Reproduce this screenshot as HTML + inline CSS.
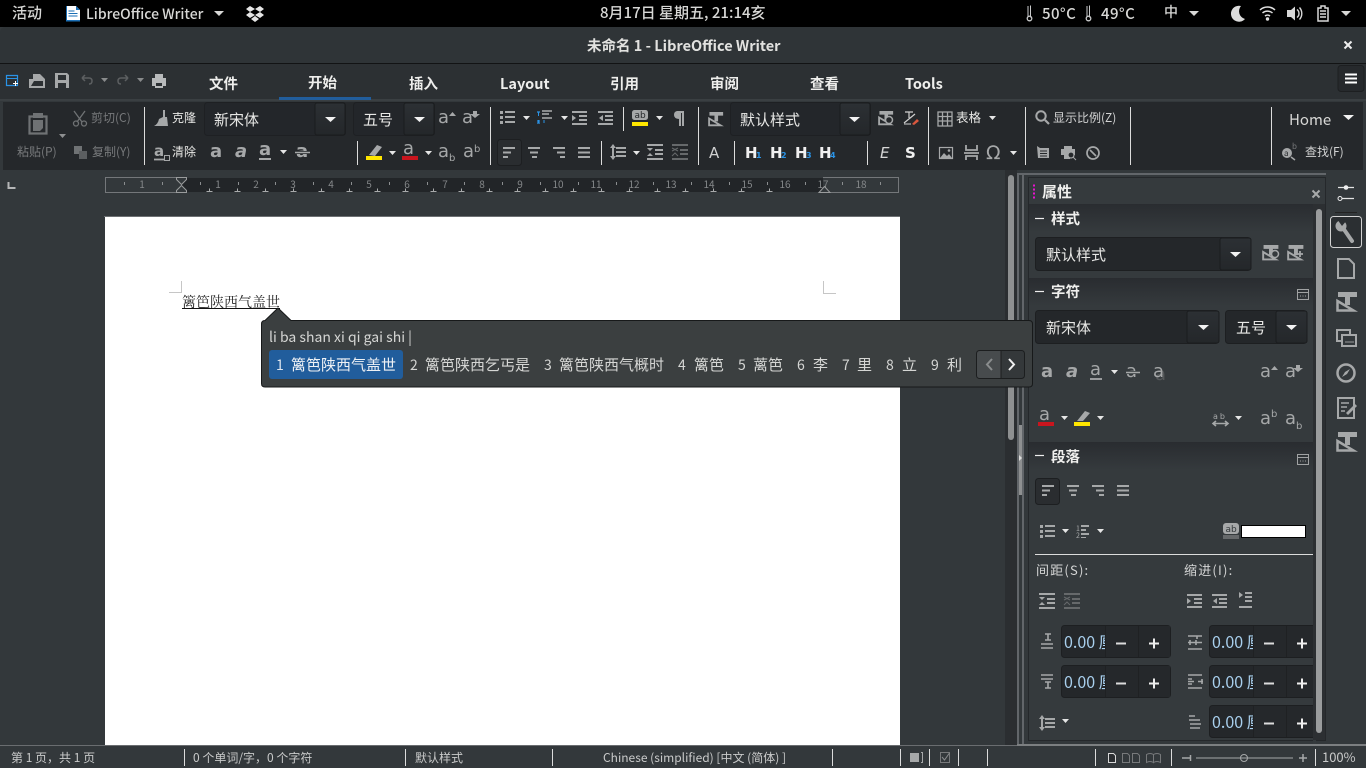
<!DOCTYPE html>
<html lang="zh-CN">
<head>
<meta charset="utf-8">
<title>未命名 1 - LibreOffice Writer</title>
<style>
html,body{margin:0;padding:0;width:1366px;height:768px;overflow:hidden;background:#33383b}
svg{display:block;position:absolute;left:0;top:0}
text{font-family:"Noto Sans CJK SC","Liberation Sans",sans-serif;fill:#e8e8e6;font-size:12px}
.top{font-size:14px;fill:#d8d8d6;font-weight:500}
.tab{font-size:14.5px;font-weight:700;fill:#eeeeec}
.dim{fill:#77797b}
.m{font-size:15px;fill:#e8e8e6}
.lab{font-size:12px;fill:#d2d3d3}
.h{font-size:14.5px;font-weight:700;fill:#f0f0ee}
.rul{font-size:10px;fill:#85888a}
.st{font-size:12px;fill:#c9caca}
.pop{font-size:14px;fill:#d5d6d4}
.cj{font-size:15px;fill:#d5d6d4}
.a{font-family:"DejaVu Sans",sans-serif;font-size:18px;font-weight:700;fill:#a6a8a9}
.al{font-family:"DejaVu Sans",sans-serif;font-size:18px;fill:#a6a8a9}
.sb{font-family:"DejaVu Sans",sans-serif;font-size:10px;fill:#a6a8a9}
.hh{font-family:"DejaVu Sans",sans-serif;font-size:15px;font-weight:700;fill:#f0f0f0}
.sub{font-family:"DejaVu Sans",sans-serif;font-size:8px;font-weight:700;fill:#2a93e6}
.sp{font-size:16px;fill:#a9d0ee}
.ico{fill:none;stroke:#a6a8a9;stroke-width:1.6}
.fi{fill:#a6a8a9}
</style>
</head>
<body>
<svg width="1366" height="768" viewBox="0 0 1366 768" xmlns="http://www.w3.org/2000/svg">
<defs>
<linearGradient id="sec" x1="0" y1="0" x2="0" y2="1"><stop offset="0" stop-color="#292c30"/><stop offset="1" stop-color="#353a3d"/></linearGradient>
<linearGradient id="btn" x1="0" y1="0" x2="0" y2="1"><stop offset="0" stop-color="#2c3034"/><stop offset="1" stop-color="#24272a"/></linearGradient>
<path id="c" d="M0 0h7l-3.500 4z" fill="#e6e6e6"/>
<path id="C" d="M0 0h11l-5.500 5z" fill="#f2f2f2"/>
<g id="st"><path d="M2 0h19v5h-7v8H9V5H2z" fill="#a6a8a9"/><path d="M1.500 9v9.500h16z" fill="none" stroke="#a6a8a9" stroke-width="2.500"/></g>
<g id="alL" fill="#a6a8a9"><path d="M0 0h12v2H0zM0 4.500h8v2H0zM0 9h5v2H0z"/></g>
<g id="alC" fill="#a6a8a9"><path d="M0 0h12v2H0zM2 4.500h8v2H2zM4 9h5v2H4z"/></g>
<g id="alR" fill="#a6a8a9"><path d="M0 0h12v2H0zM4 4.500h8v2H4zM7 9h5v2H7z"/></g>
<g id="alJ" fill="#a6a8a9"><path d="M0 0h12v2H0zM0 4.500h12v2H0zM0 9h12v2H0z"/></g>
<g id="bul" fill="#a6a8a9"><path d="M0 0h3v3H0zM0 5h3v3H0zM0 10h3v3H0zM5 0h10v2H5zM5 5h10v2H5zM5 10h10v2H5z"/></g>
<g id="ind" fill="#a6a8a9"><path d="M0 0h15v2H0zM7 4h8v2H7zM7 8h8v2H7zM0 12h15v2H0z"/><path d="M0 4l4 3-4 3z"/></g>
<g id="out" fill="#a6a8a9"><path d="M0 0h15v2H0zM7 4h8v2H7zM7 8h8v2H7zM0 12h15v2H0z"/><path d="M5 4L1 7l4 3z"/></g>
<g id="spi" fill="#a6a8a9"><path d="M0 0h16v2H0zM8 5h8v2H8zM8 9h8v2H8zM0 14h16v2H0zM0 4h6l-3 3zM0 12h6l-3-3z"/></g>
<g id="spd" fill="#66696b"><path d="M0 0h16v2H0zM8 5h8v2H8zM8 9h8v2H8zM0 14h16v2H0z"/><path d="M0 4l6 3M6 4L0 7M0 12l3-3 3 3" stroke="#66696b" fill="none"/></g>
<g id="ls" fill="#a6a8a9"><path d="M6 3h10v2H6zM6 7h10v2H6zM6 11h10v2H6z"/><path d="M3 0l3 4H4v8h2l-3 4-3-4h2V4H0z"/></g>
<g id="pan"><rect x=".5" y=".5" width="11" height="10" fill="none" stroke="#a0a2a3"/><path d="M1 3.500h10" stroke="#a0a2a3"/><path d="M3 7h1M5.500 7h1M8 7h1" stroke="#a0a2a3"/></g>
<g id="spb"><rect x=".5" y=".5" width="109" height="32" rx="3" fill="#24272a" stroke="#1d1f21"/></g>
</defs>

<!-- top bar -->
<rect width="1366" height="27" fill="#000"/>
<text x="12" y="18" class="top" style="font-size:15px">活动</text>
<path d="M66 6h10l4 4v11H66z" fill="#fff"/><path d="M76 6l4 4h-4z" fill="#1b6fb5"/><path d="M66 6h1v15h-1zM66 20h14v1.500H66z" fill="#1b6fb5"/><path d="M68.500 11h6M68.500 13.500h9M68.500 16h9" stroke="#1b6fb5"/>
<text x="86" y="19" class="top">LibreOffice Writer</text>
<path d="M214 11h10l-5 5z" fill="#d8d8d6"/>
<path d="M250 6l5 3-5 3-4-3zM260 6l4 3-4 3-5-3zM250 12l5 3-5 3-4-3zM260 12l4 3-4 3-5-3zM255 16l4 3-4 3-4-3z" fill="#e6e6e6"/>
<text x="600" y="18" class="top" style="font-size:15px">8月17日 星期五, 21:14亥</text>
<path d="M1028 6v11.500M1030.500 5.500v12" stroke="#c9cacb" fill="none"/><circle cx="1029.500" cy="18.500" r="2.300" fill="none" stroke="#c9cacb" stroke-width="1.300"/>
<text x="1042" y="19" class="top" style="font-size:15px;letter-spacing:.4px">50°C</text>
<path d="M1087 6v11.500M1089.500 5.500v12" stroke="#c9cacb" fill="none"/><circle cx="1088.500" cy="18.500" r="2.300" fill="none" stroke="#c9cacb" stroke-width="1.300"/>
<text x="1101" y="19" class="top" style="font-size:15px;letter-spacing:.4px">49°C</text>
<text x="1164" y="17" class="top">中</text>
<path d="M1189 11h10l-5 5z" fill="#d8d8d6"/>
<path d="M1241 6a8 8 0 1 0 4 13a8 8 0 0 1-4-13z" fill="#dcdcdc"/>
<path d="M1260 10a11 11 0 0 1 15 0M1262.500 13a7.500 7.500 0 0 1 10 0M1265 16a4 4 0 0 1 5 0" fill="none" stroke="#e0e0e0" stroke-width="1.500"/><circle cx="1267.500" cy="19" r="1.700" fill="#e0e0e0"/>
<path d="M1287 10h4l4-3.500v14l-4-3.500h-4z" fill="#d8d8d8"/><path d="M1297 9.500a5 5 0 0 1 0 8M1299.500 7.500a9 9 0 0 1 0 12" fill="none" stroke="#d8d8d8" stroke-width="1.400"/>
<path d="M1321 6h4v2h3v13h-10V8h3z" fill="none" stroke="#d8d8d8" stroke-width="1.500"/><path d="M1320 11h6M1320 14h6M1320 17h6" stroke="#d8d8d8" stroke-width="1.400"/>
<path d="M1341 11h10l-5 5z" fill="#d8d8d6"/>

<!-- title bar -->
<path d="M0 33q0-6 6-6h1354q6 0 6 6v31H0z" fill="#2f3437"/>
<rect y="63" width="1366" height="1" fill="#121314"/>
<text x="587" y="51" style="font-size:14.500px;font-weight:700;fill:#e2e2e0">未命名 1 - LibreOffice Writer</text>
<path d="M1344.500 41.500l7 7M1351.500 41.500l-7 7" stroke="#eee" stroke-width="2"/>

<!-- tab row -->
<rect y="64" width="1366" height="36" fill="#2c3033"/>
<rect y="99" width="1366" height="2" fill="#3a3f42"/>
<text x="209" y="89" class="tab">文件</text>
<text x="308" y="88" class="tab">开始</text>
<text x="409" y="89" class="tab">插入</text>
<text x="500" y="89" class="tab">Layout</text>
<text x="610" y="89" class="tab">引用</text>
<text x="710" y="89" class="tab">审阅</text>
<text x="810" y="89" class="tab">查看</text>
<text x="905" y="89" class="tab">Tools</text>
<rect x="279" y="97" width="92" height="3" fill="#215d9c"/>
<path d="M6.500 75.500h11v10h-11z" fill="none" stroke="#2a93e6" stroke-width="1.200"/><path d="M6 78.500h12" stroke="#2a93e6"/><path d="M13 83.500h5M15.500 81v5" stroke="#fff"/>
<path d="M29 88V79h4V74h7l5 5v9z" fill="#a6a8a9"/><path d="M31 86l3-5h9v5z" fill="#2c3033"/>
<path d="M55 73h12l2 2v13H55z" fill="#a6a8a9"/><path d="M58 75h8v5h-8zM58 83h8v5h-8z" fill="#2c3033"/>
<path d="M82 78l3-3M82 78l3 3M82 78h7q3 0 3 3t-3 3" fill="none" stroke="#5c5f61" stroke-width="1.500"/>
<use href="#c" x="101" y="78" opacity=".5"/>
<path d="M128 78l-3-3M128 78l-3 3M128 78h-7q-3 0-3 3t3 3" fill="none" stroke="#5c5f61" stroke-width="1.500"/>
<use href="#c" x="137" y="78" opacity=".5"/>
<path d="M155 74h8v4h3v8h-3v2h-8v-2h-3v-8h3z" fill="#b8babb"/><path d="M156 83h6v3h-6z" fill="#2c3033"/>
<rect x="1338" y="65.500" width="26" height="26" rx="3" fill="#26292c" stroke="#1d1f21"/>
<path d="M1345 74.500h12M1345 78.500h12M1345 82.500h12" stroke="#fff" stroke-width="2"/>

<!-- toolbar -->
<rect x="3" y="102" width="1360" height="68" fill="#25282b"/>
<g fill="#dcdcdc">
<rect x="144" y="107" width="1" height="58"/><rect x="357" y="141" width="1" height="24"/><rect x="490" y="107" width="1" height="58"/><rect x="623" y="107" width="1" height="24"/><rect x="601" y="141" width="1" height="24"/><rect x="698" y="107" width="1" height="58"/><rect x="734" y="141" width="1" height="24"/><rect x="867" y="141" width="1" height="24"/><rect x="928" y="107" width="1" height="58"/><rect x="1025" y="107" width="1" height="58"/><rect x="1130" y="107" width="1" height="58"/><rect x="1271" y="107" width="1" height="58"/>
</g>
<!-- clipboard -->
<path d="M29.500 116.500h17v17h-17z" fill="none" stroke="#6f7274" stroke-width="2.200"/><path d="M33 113h10v5H33z" fill="#6f7274"/><path d="M33 120h10v8l-3 3h-7z" fill="#6f7274"/>
<use href="#c" x="59" y="134" opacity=".55"/>
<circle cx="76" cy="123.500" r="2.500" fill="none" stroke="#6f7274" stroke-width="1.300"/><circle cx="84" cy="123.500" r="2.500" fill="none" stroke="#6f7274" stroke-width="1.300"/><path d="M74 111l8 11M85 111l-8 11" stroke="#6f7274" stroke-width="1.300"/>
<text x="91" y="122" class="dim">剪切(C)</text>
<text x="17" y="156" class="dim">粘贴(P)</text>
<path d="M74 146h8v8h-8z" fill="#6f7274"/><path d="M79 151h8v8h-8z" fill="#5b5e60"/>
<text x="92" y="156" class="dim">复制(Y)</text>
<path d="M163 110h2v7h2l1 9h-14q4-2 5-7l4-2z" fill="#a6a8a9"/>
<text x="172" y="122">克隆</text>
<text class="al" x="154" y="156" style="font-size:15px;font-weight:700">a</text><path d="M154 159.500h10" stroke="#a6a8a9" stroke-width="1.800"/><rect x="164.500" y="155.500" width="5" height="5" fill="none" stroke="#a6a8a9"/>
<text x="172" y="156">清除</text>
<text class="a" x="210" y="157">a</text>
<text class="a" x="235" y="157" font-style="italic">a</text>
<text class="al" x="259" y="155" style="font-weight:700">a</text><path d="M259 159h12" stroke="#a6a8a9" stroke-width="2"/>
<use href="#c" x="280" y="150"/>
<text class="a" x="296" y="157">a</text><path d="M295 152.500h15" stroke="#25282b" stroke-width="3"/><path d="M295 152.500h15" stroke="#a6a8a9" stroke-width="1.500"/>
<!-- font combo -->
<rect x="204.500" y="102.500" width="141" height="33" rx="3" fill="#23262a" stroke="#1e2023"/>
<rect x="315" y="103" width="30" height="32" rx="2" fill="url(#btn)" stroke="#1a1c1e"/>
<use href="#C" x="325" y="117"/>
<text x="214" y="125" class="m">新宋体</text>
<rect x="353.500" y="102.500" width="81" height="33" rx="3" fill="#23262a" stroke="#1e2023"/>
<rect x="404" y="103" width="30" height="32" rx="2" fill="url(#btn)" stroke="#1a1c1e"/>
<use href="#C" x="414" y="117"/>
<text x="363" y="125" class="m">五号</text>
<text class="al" x="438" y="123">a</text><path d="M449 116l3.500-4 3.500 4z" class="fi"/>
<text class="al" x="462" y="123">a</text><path d="M473 111h4v3h3l-5 4-5-4h3z" class="fi"/>
<path d="M369 155l8-10 5 2-7 9z" fill="#a6a8a9"/><rect x="366" y="156" width="16" height="4" fill="#ffe600"/>
<use href="#c" x="389" y="151"/>
<text class="al" x="403" y="154">a</text><rect x="402" y="156" width="16" height="4" fill="#c9151e"/>
<use href="#c" x="425" y="151"/>
<text class="al" x="438" y="157">a</text><text class="sb" x="449" y="161">b</text>
<text class="al" x="463" y="157">a</text><text class="sb" x="474" y="152">b</text>
<!-- list row -->
<use href="#bul" x="500" y="111"/><use href="#c" x="523" y="116"/>
<path d="M537 112h3M537 121h3M537 123h3" stroke="#2a93e6" stroke-width="1.300"/><path d="M538.500 112v4M538.500 120v3M544 120v3" stroke="#2a93e6"/><path d="M542 111h10M542 114h7M542 118h10" stroke="#c8c8c8" stroke-width="1.200"/>
<use href="#c" x="561" y="116"/>
<use href="#ind" x="572" y="111"/><use href="#out" x="598" y="111"/>
<rect x="632" y="110" width="16" height="10" rx="2.500" fill="#a6a8a9"/><text x="634.500" y="118" style="font-size:9px;fill:#25282b;font-family:'DejaVu Sans',sans-serif">ab</text><rect x="632" y="122" width="16" height="4" fill="#ffe600"/>
<use href="#c" x="656" y="116"/>
<path d="M677 111h7v15h-2v-13h-1v13h-2v-7q-5-.5-5-4t3-4z" fill="#a6a8a9"/>
<rect x="497.500" y="139.500" width="24" height="26" rx="3" fill="#2a2d30" stroke="#1d1f21"/>
<use href="#alL" x="503" y="147"/><use href="#alC" x="528" y="147"/><use href="#alR" x="553" y="147"/><use href="#alJ" x="578" y="147"/>
<use href="#ls" x="610" y="144"/><use href="#c" x="633" y="151"/>
<use href="#spi" x="647" y="144"/><use href="#spd" x="672" y="144"/>
<!-- styles -->
<use href="#st" x="708" y="112" transform="translate(708 112) scale(.72) translate(-708 -112)"/>
<rect x="730.500" y="102.500" width="140" height="33" rx="3" fill="#23262a" stroke="#1e2023"/>
<rect x="840" y="103" width="30" height="32" rx="2" fill="url(#btn)" stroke="#1a1c1e"/>
<use href="#C" x="849" y="117"/>
<text x="740" y="125" class="m">默认样式</text>
<use href="#st" x="878" y="111" transform="translate(878 111) scale(.72) translate(-878 -111)"/><circle cx="889" cy="120" r="3.500" fill="#25282b" stroke="#a6a8a9" stroke-width="1.500"/>
<path d="M905 112h8M909 112v6M904 123l11-9" stroke="#d0d0d0" stroke-width="1.200"/><path d="M904 124h7" stroke="#d0d0d0"/><path d="M912 124l5-5 2 2-5 4z" fill="#d9573e"/>
<text x="709" y="158" style="font-family:'DejaVu Sans',sans-serif;font-size:15px;fill:#cfd0d0">A</text>
<text class="hh" x="745" y="158">H</text><text class="sub" x="756" y="158">1</text>
<text class="hh" x="770" y="158">H</text><text class="sub" x="781" y="158">2</text>
<text class="hh" x="795" y="158">H</text><text class="sub" x="806" y="158">3</text>
<text class="hh" x="819" y="158">H</text><text class="sub" x="830" y="158">4</text>
<text x="880" y="158" style="font-family:'DejaVu Sans',sans-serif;font-size:15px;font-style:italic;fill:#d8d8d8">E</text>
<text x="905" y="158" class="hh">S</text>
<path d="M938 112h14v14h-14zM938 116.500h14M938 121h14M942.500 112v14M947.500 112v14" fill="none" stroke="#a6a8a9" stroke-width="1.300"/>
<text x="956" y="122" style="font-size:12.500px">表格</text>
<use href="#c" x="989" y="116"/>
<rect x="939.500" y="147.500" width="13" height="11" fill="none" stroke="#a6a8a9" stroke-width="1.200"/><path d="M940 158l4-5 3 3 2-2 3 4z" class="fi"/><circle cx="949" cy="150.500" r="1.300" class="fi"/>
<path d="M966 145v5h11v-5M964 153h15M966 160v-4h11v4" fill="none" stroke="#a6a8a9" stroke-width="1.800"/>
<text x="986" y="159" style="font-family:'DejaVu Sans',sans-serif;font-size:19px;fill:#a6a8a9">Ω</text>
<use href="#c" x="1010" y="151"/>
<circle cx="1041" cy="116" r="4.700" fill="none" stroke="#a6a8a9" stroke-width="2"/><path d="M1045 120l4 4" stroke="#a6a8a9" stroke-width="2.200"/>
<text x="1053" y="122" class="lab">显示比例(Z)</text>
<path d="M1037 146l3 2h9v10h-11z" class="fi"/><path d="M1040 151h7M1040 153.500h7M1040 156h7" stroke="#25282b"/>
<path d="M1064 146h8v3h3v6h-5v4h-6v-4h-3v-6h3z" class="fi"/><circle cx="1071" cy="155" r="3" fill="#25282b" stroke="#a6a8a9" stroke-width="1.200"/><path d="M1073 157l3 3" stroke="#a6a8a9"/>
<circle cx="1093" cy="153" r="6" fill="none" stroke="#a6a8a9" stroke-width="1.700"/><path d="M1090 150l6 6" stroke="#a6a8a9" stroke-width="1.700"/>
<text x="1289" y="125" style="font-size:15px;fill:#d8d8d6">Home</text>
<use href="#C" x="1343" y="115"/>
<circle cx="1287" cy="153" r="5" class="fi"/><path d="M1291 157l4 3" stroke="#a6a8a9" stroke-width="1.500"/><text x="1284" y="156" style="font-size:8px;fill:#25282b">a</text><text x="1292" y="149" style="font-size:8px;fill:#77797b">b</text>
<text x="1305" y="156" class="lab">查找(F)</text>

<!-- work area -->
<rect y="170" width="1005" height="575" fill="#33383b"/>
<path d="M8.500 182v6h7" fill="none" stroke="#b5b6b7" stroke-width="2"/>
<!-- ruler -->
<rect x="181" y="177" width="642" height="16" fill="#222528"/>
<rect x="105.500" y="177.500" width="793" height="15" fill="none" stroke="#74777a"/>
<rect x="181" y="177" width="642" height="1" fill="#33383b"/><rect x="181" y="192" width="642" height="1" fill="#33383b"/>
<path d="M124.500 182v3M162.500 182v3M200.500 182v3M238.500 182v3M275.500 182v3M313.500 182v3M351.500 182v3M389.500 182v3M427.500 182v3M464.500 182v3M502.500 182v3M540.500 182v3M578.500 182v3M616.500 182v3M653.500 182v3M691.500 182v3M729.500 182v3M767.500 182v3M805.500 182v3M842.500 182v3M880.500 182v3" stroke="#8a8d8f"/>
<path d="M209.500 189v3m-3 0h6m25-3v3m-3 0h6m25-3v3m-3 0h6m25-3v3m-3 0h6m25-3v3m-3 0h6m25-3v3m-3 0h6m25-3v3m-3 0h6m25-3v3m-3 0h6m25-3v3m-3 0h6m25-3v3m-3 0h6m25-3v3m-3 0h6m25-3v3m-3 0h6m25-3v3m-3 0h6m25-3v3m-3 0h6m25-3v3m-3 0h6m25-3v3m-3 0h6m25-3v3m-3 0h6m25-3v3m-3 0h6m25-3v3m-3 0h6m25-3v3m-3 0h6m25-3v3m-3 0h6" stroke="#a8aaab" fill="none" transform="translate(0 -.5)"/>
<g class="rul" text-anchor="middle">
<text class="rul" x="142" y="188" text-anchor="middle">1</text><text class="rul" x="218" y="188" text-anchor="middle">1</text><text class="rul" x="256" y="188" text-anchor="middle">2</text><text class="rul" x="293" y="188" text-anchor="middle">3</text><text class="rul" x="331" y="188" text-anchor="middle">4</text><text class="rul" x="369" y="188" text-anchor="middle">5</text><text class="rul" x="407" y="188" text-anchor="middle">6</text><text class="rul" x="445" y="188" text-anchor="middle">7</text><text class="rul" x="482" y="188" text-anchor="middle">8</text><text class="rul" x="520" y="188" text-anchor="middle">9</text><text class="rul" x="558" y="188" text-anchor="middle">10</text><text class="rul" x="596" y="188" text-anchor="middle">11</text><text class="rul" x="634" y="188" text-anchor="middle">12</text><text class="rul" x="671" y="188" text-anchor="middle">13</text><text class="rul" x="709" y="188" text-anchor="middle">14</text><text class="rul" x="747" y="188" text-anchor="middle">15</text><text class="rul" x="785" y="188" text-anchor="middle">16</text><text class="rul" x="823" y="188" text-anchor="middle">17</text><text class="rul" x="861" y="188" text-anchor="middle">18</text>
</g>
<path d="M176.500 177.500h10v2l-5 5-5-5zM176.500 192.500h10v-2l-5-5-5 5z" fill="#33383b" stroke="#9a9c9d"/>
<path d="M819 192.500l5.500-6 5.500 6z" fill="#33383b" stroke="#9a9c9d"/>
<!-- page -->
<rect x="104" y="216" width="796" height="1" fill="#6d7073"/>
<rect x="105" y="217" width="795" height="528" fill="#fff"/>
<path d="M169 292.500h12.500V281M823.500 281v12.500H836" fill="none" stroke="#c6c6c6"/>
<text x="182" y="307" style="font-family:'Noto Serif CJK SC','Liberation Serif',serif;font-size:14px;fill:#222">篱笆陕西气盖世</text>
<rect x="182" y="308" width="98" height="1" fill="#111"/>
<!-- doc scrollbar -->
<rect x="1005" y="170" width="12" height="575" fill="#2b2e31"/>
<rect x="1008" y="175" width="6" height="265" rx="3" fill="#8e9091"/>
<!-- sidebar frame -->
<rect x="1017" y="170" width="349" height="575" fill="#33383b"/>
<rect x="1017" y="173" width="309" height="2" fill="#62666a"/>
<rect x="1017" y="173" width="2" height="572" fill="#62666a"/>
<rect x="1022" y="173" width="2" height="572" fill="#62666a"/>
<rect x="1019" y="425" width="3" height="70" fill="#8e9091"/>
<path d="M1019 455l3 3-3 3z" fill="#ddd"/>
<rect x="1028.500" y="177.500" width="297" height="563" fill="#353a3d" stroke="#25282b"/>
<path d="M1034 184.500v2M1034 188.500v2M1034 192.500v2M1034 196.500v2" stroke="#e912d0" stroke-width="2"/>
<text x="1042" y="197" style="font-size:15px;font-weight:700;fill:#f0f0ee">属性</text>
<path d="M1312.500 190.500l7 7M1319.500 190.500l-7 7" stroke="#a8aaab" stroke-width="2"/>
<!-- section 样式 -->
<rect x="1029" y="204" width="284" height="28" fill="url(#sec)"/>
<path d="M1035 218.500h9" stroke="#eee" stroke-width="1.200"/>
<text x="1051" y="224" class="h">样式</text>
<rect x="1035.500" y="237.500" width="215" height="33" rx="3" fill="#24272a" stroke="#1d1f21"/>
<rect x="1220" y="238" width="31" height="32" rx="2" fill="url(#btn)" stroke="#1a1c1e"/>
<use href="#C" x="1230" y="252"/>
<text x="1046" y="260" class="m">默认样式</text>
<use href="#st" x="1262" y="245" transform="translate(1262 245) scale(.78) translate(-1262 -245)"/>
<circle cx="1275" cy="254" r="3.500" fill="#353a3d" stroke="#a6a8a9" stroke-width="1.500"/>
<use href="#st" x="1287" y="245" transform="translate(1287 245) scale(.78) translate(-1287 -245)"/>
<path d="M1297 254h6M1300 251v6" stroke="#a6a8a9" stroke-width="1.800"/>
<!-- section 字符 -->
<rect x="1029" y="278" width="284" height="28" fill="url(#sec)"/>
<path d="M1035 291.500h9" stroke="#eee" stroke-width="1.200"/>
<text x="1051" y="297" class="h">字符</text>
<use href="#pan" x="1297" y="289"/>
<rect x="1035.500" y="310.500" width="183" height="33" rx="3" fill="#24272a" stroke="#1d1f21"/>
<rect x="1187" y="311" width="32" height="32" rx="2" fill="url(#btn)" stroke="#1a1c1e"/>
<use href="#C" x="1198" y="325"/>
<text x="1046" y="333" class="m">新宋体</text>
<rect x="1225.500" y="310.500" width="81" height="33" rx="3" fill="#24272a" stroke="#1d1f21"/>
<rect x="1276" y="311" width="31" height="32" rx="2" fill="url(#btn)" stroke="#1a1c1e"/>
<use href="#C" x="1286" y="325"/>
<text x="1236" y="333" class="m">五号</text>
<text class="a" x="1041" y="377">a</text>
<text class="a" x="1066" y="377" font-style="italic">a</text>
<text class="al" x="1090" y="375">a</text><path d="M1090 379h12" stroke="#a6a8a9" stroke-width="1.800"/>
<use href="#c" x="1111" y="370"/>
<text class="al" x="1126" y="377">a</text><path d="M1126 372.500h14" stroke="#353a3d" stroke-width="3"/><path d="M1126 372.500h14" stroke="#a6a8a9" stroke-width="1.500"/>
<text x="1155" y="380" class="al" style="fill:#55585a">a</text><text class="al" x="1153" y="377">a</text>
<text class="al" x="1260" y="377">a</text><path d="M1271 370l3.500-4 3.500 4z" class="fi"/>
<text class="al" x="1285" y="377">a</text><path d="M1296 365h4v3h3l-5 4-5-4h3z" class="fi"/>
<text class="al" x="1039" y="420">a</text><rect x="1038" y="422" width="16" height="4" fill="#c9151e"/>
<use href="#c" x="1061" y="416"/>
<path d="M1077 421l8-10 5 2-7 8z" fill="#a6a8a9"/><rect x="1074" y="422" width="16" height="4" fill="#ffe600"/>
<use href="#c" x="1097" y="416"/>
<text x="1213" y="419" style="font-family:'DejaVu Sans',sans-serif;font-size:8px;fill:#a6a8a9;letter-spacing:2px">ab</text>
<path d="M1214 423.500h13M1216 421l-3 2.500 3 2.500M1225 421l3 2.500-3 2.500" fill="none" stroke="#a6a8a9" stroke-width="1.600"/>
<use href="#c" x="1235" y="416"/>
<text class="al" x="1260" y="424">a</text><text class="sb" x="1271" y="417">b</text>
<text class="al" x="1285" y="424">a</text><text class="sb" x="1296" y="429">b</text>
<!-- section 段落 -->
<rect x="1029" y="442" width="284" height="28" fill="url(#sec)"/>
<path d="M1035 455.500h9" stroke="#eee" stroke-width="1.200"/>
<text x="1051" y="462" class="h">段落</text>
<use href="#pan" x="1297" y="454"/>
<rect x="1035.500" y="478.500" width="24" height="26" rx="3" fill="#2a2d30" stroke="#1d1f21"/>
<use href="#alL" x="1042" y="485"/><use href="#alC" x="1067" y="485"/><use href="#alR" x="1092" y="485"/><use href="#alJ" x="1117" y="485"/>
<g transform="translate(1040 525)"><use href="#bul"/></g>
<use href="#c" x="1062" y="529"/>
<text x="1076" y="531" style="font-size:7px;fill:#a6a8a9">1</text><text x="1076" y="538" style="font-size:7px;fill:#a6a8a9">2</text><path d="M1081 525h8v2h-8zM1081 529h5v2h-5zM1081 533h8v2h-8zM1081 537h5v1h-5z" class="fi"/>
<use href="#c" x="1097" y="529"/>
<rect x="1223" y="523" width="16" height="11" rx="3" fill="#a6a8a9"/><text x="1225.500" y="532" style="font-size:9px;fill:#33383b;font-family:'DejaVu Sans',sans-serif">ab</text><rect x="1223" y="535" width="16" height="4" fill="#66696b"/>
<rect x="1241.500" y="525.500" width="64" height="12" fill="#fff" stroke="#000"/>
<rect x="1035" y="554" width="278" height="1" fill="#dcdcdc"/>
<text x="1036" y="575" style="font-size:13px;fill:#d5d6d6;letter-spacing:1.200px">间距(S):</text>
<text x="1184" y="575" style="font-size:13px;fill:#d5d6d6;letter-spacing:1.200px">缩进(I):</text>
<use href="#spi" x="1039" y="593"/><use href="#spd" x="1064" y="593"/>
<use href="#ind" x="1187" y="594"/><use href="#out" x="1212" y="594"/>
<path d="M1239 592l4 3-4 3zM1245 592h7v2h-7zM1245 596h7v2h-7zM1245 600h7v2h-7zM1239 606h13v2h-13z" class="fi"/>
<!-- spin boxes -->
<use href="#spb" x="1061" y="625"/><use href="#spb" x="1061" y="665"/>
<use href="#spb" x="1209" y="625"/><use href="#spb" x="1209" y="665"/><use href="#spb" x="1209" y="705"/>
<g>
<text class="sp" x="1064" y="648">0.00 厘</text><text class="sp" x="1064" y="688">0.00 厘</text>
<text class="sp" x="1212" y="648">0.00 厘</text><text class="sp" x="1212" y="688">0.00 厘</text><text class="sp" x="1212" y="728">0.00 厘</text>
</g>
<g fill="#25282b">
<rect x="1105" y="626" width="65" height="31"/><rect x="1105" y="666" width="65" height="31"/>
<rect x="1253" y="626" width="65" height="31"/><rect x="1253" y="666" width="65" height="31"/><rect x="1253" y="706" width="65" height="31"/>
</g>
<path d="M1105.500 626v31M1138.500 626v31M1105.500 666v31M1138.500 666v31M1253.500 626v31M1286.500 626v31M1253.500 666v31M1286.500 666v31M1253.500 706v31M1286.500 706v31" stroke="#1f2123"/>
<path d="M1116 643.500h10M1116 683.500h10M1264 643.500h10M1264 683.500h10M1264 723.500h10" stroke="#dcdcdc" stroke-width="2"/>
<path d="M1149 643.500h10M1154 638.500v10M1149 683.500h10M1154 678.500v10M1297 643.500h10M1302 638.500v10M1297 683.500h10M1302 678.500v10M1297 723.500h10M1302 718.500v10" stroke="#eeeeee" stroke-width="2"/>
<rect x="1313" y="600" width="3" height="145" fill="#353a3d"/>
<!-- spin icons -->
<path d="M1045 634h6M1048 634v6M1045 640h6M1041 644h12M1041 648h12" fill="none" stroke="#a6a8a9" stroke-width="1.600"/>
<path d="M1041 675h12M1041 679h12M1045 682h6M1048 682v6M1045 688h6" fill="none" stroke="#a6a8a9" stroke-width="1.600"/>
<path d="M1188 636h14M1188 649h14M1188 642.500h14M1190 640v5M1196 640v5M1197 636v3" fill="none" stroke="#a6a8a9" stroke-width="1.600"/>
<path d="M1188 675h14M1188 688h14M1188 681.500h6M1198 681.500h5M1202 679v5M1188 679h4M1188 684h4" fill="none" stroke="#a6a8a9" stroke-width="1.600"/>
<path d="M1189 716h6M1189 720h11M1190 724h11M1190 728h10" fill="none" stroke="#a6a8a9" stroke-width="1.600"/>
<use href="#ls" x="1039" y="715"/>
<use href="#c" x="1062" y="719"/>
<!-- panel scrollbar -->
<rect x="1313" y="204" width="12" height="536" fill="#2c2f32"/>
<rect x="1316" y="209" width="6" height="524" rx="3" fill="#9a9c9d"/>
<!-- deck -->
<path d="M1338 187.500h16M1338 198.500h16" stroke="#e4e4e4" stroke-width="1.200"/><circle cx="1346" cy="187.500" r="2.300" fill="#eee"/><circle cx="1340" cy="198.500" r="2" fill="#33383b" stroke="#eee"/>
<rect x="1335" y="212" width="22" height="1" fill="#222"/>
<rect x="1330.500" y="216.500" width="31" height="31" rx="3" fill="#2b2f32" stroke="#d2d2d2"/>
<path d="M1343 228l9 13" stroke="#a6a8a9" stroke-width="4" stroke-linecap="round"/><circle cx="1341" cy="226" r="5.500" fill="#a6a8a9"/><path d="M1337 219l5 7 5-6z" fill="#2b2f32"/>
<path d="M1338 259h11l5 5v14h-16z" fill="none" stroke="#a6a8a9" stroke-width="2"/>
<use href="#st" x="1336" y="292"/>
<rect x="1337" y="330" width="13" height="11" fill="none" stroke="#a6a8a9" stroke-width="2"/><rect x="1342" y="335" width="14" height="11" fill="#33383b" stroke="#a6a8a9" stroke-width="2"/><rect x="1345" y="341" width="9" height="2" fill="#66696b"/>
<circle cx="1346" cy="373" r="8.500" fill="none" stroke="#a6a8a9" stroke-width="2.500"/><path d="M1342 377l3-5 5-3-3 5z" class="fi"/>
<path d="M1338 398h16v20h-16z" fill="none" stroke="#a6a8a9" stroke-width="2"/><path d="M1341 403h8M1341 407h6M1341 411h4" stroke="#a6a8a9" stroke-width="1.500"/><path d="M1346 413l9-9 2 2-9 9z" class="fi"/>
<use href="#st" x="1336" y="432"/>

<!-- popup -->
<path d="M265 320.500L278 308l13 12.500h738q3.500 0 3.500 3.500v59.500q0 3.500-3.500 3.500H265q-3.500 0-3.500-3.500V324q0-3.500 3.500-3.500z" fill="#3b3f40" stroke="#17191a"/>
<text x="269" y="342" class="pop">li ba shan xi qi gai shi |</text>
<rect x="269" y="350" width="134" height="29" rx="3" fill="#215d9c"/>
<text x="276" y="370" class="pop" style="fill:#dfe6ef">1</text><text x="291" y="370" class="cj" style="fill:#eef1f5">篱笆陕西气盖世</text>
<text x="410" y="370" class="pop">2</text><text x="425" y="370" class="cj">篱笆陕西乞丐是</text>
<text x="544" y="370" class="pop">3</text><text x="559" y="370" class="cj">篱笆陕西气概时</text>
<text x="678" y="370" class="pop">4</text><text x="694" y="370" class="cj">篱笆</text>
<text x="738" y="370" class="pop">5</text><text x="753" y="370" class="cj">蓠笆</text>
<text x="797" y="370" class="pop">6</text><text x="813" y="370" class="cj">李</text>
<text x="842" y="370" class="pop">7</text><text x="857" y="370" class="cj">里</text>
<text x="886" y="370" class="pop">8</text><text x="902" y="370" class="cj">立</text>
<text x="931" y="370" class="pop">9</text><text x="947" y="370" class="cj">利</text>
<rect x="976.500" y="350.500" width="48" height="28" rx="3" fill="#34383a" stroke="#1c1e1f"/>
<path d="M977 354q0-3 3-3h21v27h-21q-3 0-3-3z" fill="#474b4d"/>
<path d="M1001 350.500v28" stroke="#1c1e1f"/>
<path d="M992 359l-5 5.500 5 5.500" fill="none" stroke="#8a8d8e" stroke-width="2"/>
<path d="M1009 359l5 5.500-5 5.500" fill="none" stroke="#f0f0f0" stroke-width="2"/>

<!-- status -->
<rect y="745" width="1366" height="23" fill="#33383b"/>
<rect y="745" width="1366" height="1" fill="#6a6d70"/>
<rect x="1017" y="744" width="349" height="2" fill="#7c7f81"/>
<g fill="#dcdcdc">
<rect x="184" y="749" width="1" height="17"/><rect x="405" y="749" width="1" height="17"/><rect x="552" y="749" width="1" height="17"/><rect x="832" y="749" width="1" height="17"/><rect x="900" y="749" width="1" height="17"/><rect x="929" y="749" width="1" height="17"/><rect x="958" y="749" width="1" height="17"/><rect x="987" y="749" width="1" height="17"/><rect x="1095" y="749" width="1" height="17"/><rect x="1171" y="749" width="1" height="17"/><rect x="1315" y="749" width="1" height="17"/>
</g>
<text x="11" y="762" class="st">第 1 页，共 1 页</text>
<text x="193" y="762" class="st">0 个单词/字，0 个字符</text>
<text x="415" y="762" class="st">默认样式</text>
<text x="603" y="762" class="st">Chinese (simplified) [中文 (简体) ]</text>
<rect x="910" y="753" width="9" height="9" fill="#a6a8a9"/><path d="M921 752.500h1.500v10H921" stroke="#a6a8a9" fill="none"/>
<rect x="940.500" y="752.500" width="9" height="10" fill="none" stroke="#77797b"/><path d="M942 757l2.500 3 5-7" fill="none" stroke="#8a8c8e"/>
<path d="M1108.500 753.500h5l2 2v7h-7z" fill="#2b2e31" stroke="#d8d8d8"/>
<path d="M1122.500 753.500h5l2 2v7h-7zM1132.500 753.500h5l2 2v7h-7z" fill="none" stroke="#77797b"/>
<path d="M1146.500 754.500q3.500-2 7 0v8q-3.500-2-7 0zM1153.500 754.500q3.500-2 7 0v8q-3.500-2-7 0z" fill="none" stroke="#77797b"/>
<path d="M1182 758h9M1190.500 755v6" stroke="#a6a8a9" stroke-width="1.500"/>
<rect x="1196" y="757.500" width="97" height="1" fill="#a6a8a9"/>
<circle cx="1244" cy="758" r="3.500" fill="#33383b" stroke="#a6a8a9"/><path d="M1241 758h6" stroke="#a6a8a9"/>
<path d="M1299 758h8M1303 754v8" stroke="#a6a8a9" stroke-width="1.500"/>
<text x="1322" y="762" style="font-size:13px;fill:#c9caca">100%</text>
</svg>
</body>
</html>
